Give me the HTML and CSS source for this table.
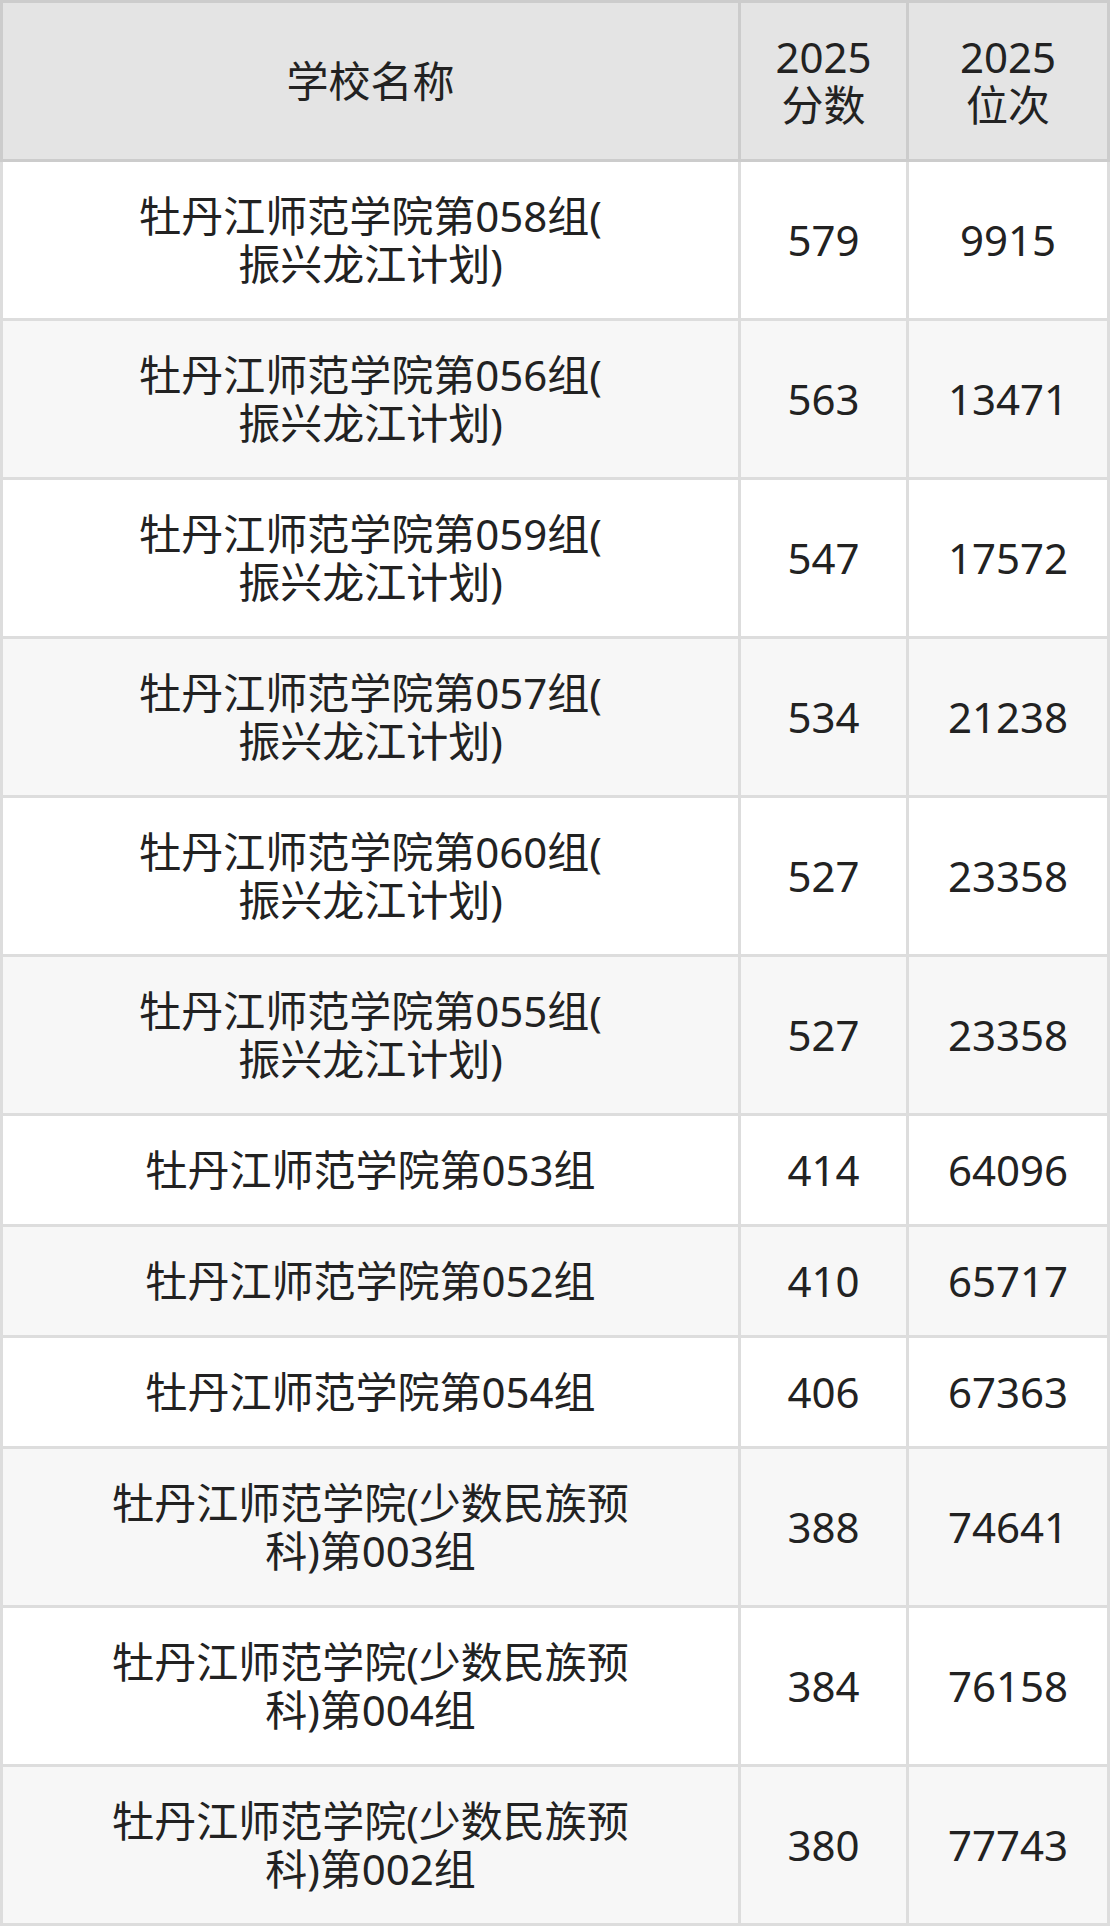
FILE: index.html
```html
<!DOCTYPE html>
<html lang="zh-CN">
<head>
<meta charset="utf-8">
<title>牡丹江师范学院 2025 分数位次</title>
<link rel="stylesheet" href="styles.css">
</head>
<body>
<table class="score-table">
  <thead>
    <tr>
      <th class="col-name">学校名称</th>
      <th class="col-score">2025<br>分数</th>
      <th class="col-rank">2025<br>位次</th>
    </tr>
  </thead>
  <tbody>
    <tr><td>牡丹江师范学院第058组(<br>振兴龙江计划)</td><td>579</td><td>9915</td></tr>
    <tr><td>牡丹江师范学院第056组(<br>振兴龙江计划)</td><td>563</td><td>13471</td></tr>
    <tr><td>牡丹江师范学院第059组(<br>振兴龙江计划)</td><td>547</td><td>17572</td></tr>
    <tr><td>牡丹江师范学院第057组(<br>振兴龙江计划)</td><td>534</td><td>21238</td></tr>
    <tr><td>牡丹江师范学院第060组(<br>振兴龙江计划)</td><td>527</td><td>23358</td></tr>
    <tr><td>牡丹江师范学院第055组(<br>振兴龙江计划)</td><td>527</td><td>23358</td></tr>
    <tr><td>牡丹江师范学院第053组</td><td>414</td><td>64096</td></tr>
    <tr><td>牡丹江师范学院第052组</td><td>410</td><td>65717</td></tr>
    <tr><td>牡丹江师范学院第054组</td><td>406</td><td>67363</td></tr>
    <tr><td>牡丹江师范学院(少数民族预<br>科)第003组</td><td>388</td><td>74641</td></tr>
    <tr><td>牡丹江师范学院(少数民族预<br>科)第004组</td><td>384</td><td>76158</td></tr>
    <tr><td>牡丹江师范学院(少数民族预<br>科)第002组</td><td>380</td><td>77743</td></tr>
  </tbody>
</table>
</body>
</html>
```

FILE: styles.css
```css
html, body {
  margin: 0;
  padding: 0;
  background: #ffffff;
}

body {
  font-family: "Noto Sans", "Noto Sans CJK SC", sans-serif;
  color: #222222;
}

.score-table {
  width: 1110px;
  table-layout: fixed;
  border-collapse: separate;
  border-spacing: 0;
}

.score-table th,
.score-table td {
  box-sizing: border-box;
  padding: 30px 10px;
  font-size: 42px;
  line-height: 48px;
  font-weight: 400;
  text-align: center;
  vertical-align: middle;
  border-right: 3px solid #dddddd;
  border-bottom: 3px solid #dddddd;
}

.score-table th {
  background: #e4e4e4;
  border-top: 3px solid #cccccc;
  border-right-color: #cccccc;
  border-bottom-color: #cccccc;
}

.score-table th:first-child {
  border-left: 3px solid #cccccc;
}

.score-table td:first-child {
  border-left: 3px solid #dddddd;
}

.col-name { width: 741px; }
.col-score { width: 168px; }
.col-rank { width: 201px; }

.score-table tbody tr:nth-child(odd) td {
  background: #ffffff;
}

.score-table tbody tr:nth-child(even) td {
  background: #f7f7f7;
}
```
